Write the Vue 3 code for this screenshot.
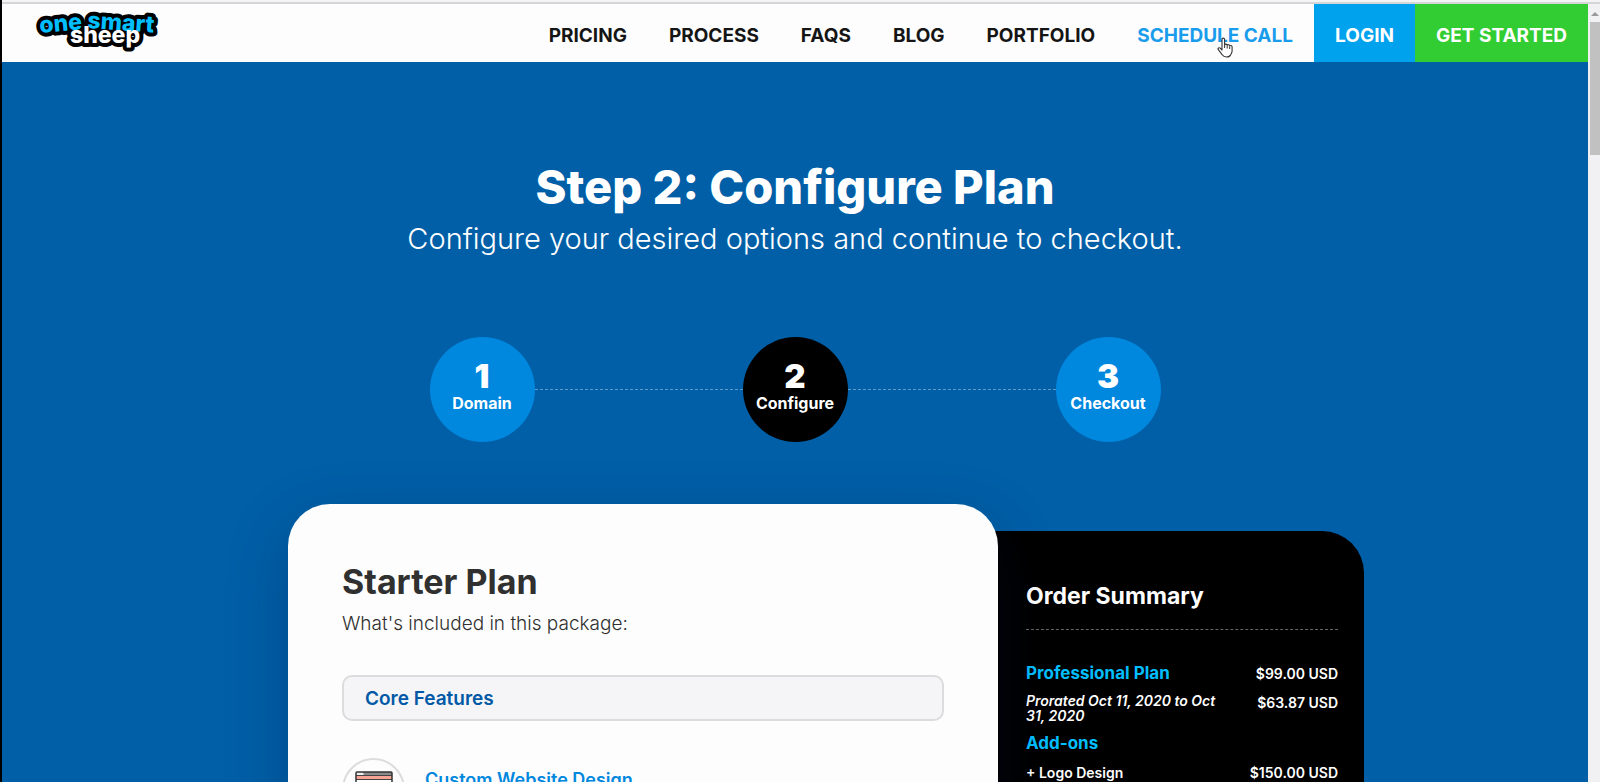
<script setup>
const links = ['Pricing', 'Process', 'FAQs', 'Blog', 'Portfolio']

const steps = [
  { number: 1, label: 'Domain', active: false },
  { number: 2, label: 'Configure', active: true },
  { number: 3, label: 'Checkout', active: false },
]
</script>

<template>
  <div class="window">
    <div class="chrome"></div>
    <div class="viewport">
      <div class="page">
        <header class="header">
          <a class="logo" href="#" aria-label="One Smart Sheep">
            <svg width="136" height="50" viewBox="-4 -4 136 50" aria-hidden="true">
              <use class="logo-outline" href="#logo-one" />
              <use class="logo-outline" href="#logo-smart" />
              <use class="logo-outline" href="#logo-sheep" />
              <g class="logo-text">
                <text id="logo-one" x="4" y="21" transform="rotate(-5 4 21)">one</text>
                <text id="logo-smart" x="51" y="16" transform="rotate(4 51 16)">smart</text>
              </g>
              <g class="logo-text white">
                <text id="logo-sheep" x="34" y="31">sheep</text>
              </g>
            </svg>
          </a>
          <nav class="nav">
            <a v-for="link in links" :key="link" href="#">{{ link }}</a>
            <a class="hovered" href="#">
              Schedule Call
              <svg class="pointer" width="17" height="21" viewBox="0 0 17 21" aria-hidden="true">
                <path
                  d="M5 12V2.5C5 .6 7.6.6 7.6 2.5V8c.3-1.3 2.5-1.2 2.6.3.4-1 2.4-.9 2.5.7.6-.9 2.4-.6 2.4 1v4c0 1.500-1 2.500-1.300 3.500C13 19.600 11 20 9.500 20c-2 0-3.300-.700-4.200-2.200L1.300 12.700c-.8-1.400.8-2.600 2-1.500L5 13z"
                  fill="#fff" stroke="#333" stroke-width="1.100" stroke-linejoin="round"
                />
                <path d="M7.600 8v3M10.200 8.500v3M12.700 9.500v2.500" stroke="#333" />
              </svg>
            </a>
            <a class="login" href="#">Login</a>
            <a class="start" href="#">Get Started</a>
          </nav>
        </header>

        <main class="main">
          <h1>Step 2: Configure Plan</h1>
          <p class="lead">Configure your desired options and continue to checkout.</p>

          <ol class="steps">
            <li v-for="step in steps" :key="step.number" class="step" :class="{ active: step.active }">
              <span class="circle">
                <b>{{ step.number }}</b>
                <span>{{ step.label }}</span>
              </span>
            </li>
          </ol>

          <div class="columns">
            <section class="plan">
              <h2>Starter Plan</h2>
              <p class="included">What's included in this package:</p>
              <h3 class="group">Core Features</h3>
              <div class="feature">
                <span class="feature-icon">
                  <svg width="38" height="38" viewBox="0 0 38 38" aria-hidden="true">
                    <rect x="1" y="1" width="36" height="36" fill="#fff" />
                    <rect x="1" y="1" width="36" height="4" fill="#8a8a8a" />
                    <path d="M1 1h7l1 4H1z" fill="#eee" />
                    <rect x="1" y="5" width="36" height="3" fill="#f7a494" />
                    <path d="M1 4.500h36M1 8.500h36" stroke="#444" />
                    <path d="M5 11.500h12M5 15.500h10" stroke="#777" />
                    <rect x="1" y="1" width="36" height="36" rx="1" fill="none" stroke="#333" stroke-width="1.500" />
                  </svg>
                </span>
                <h4>Custom Website Design</h4>
              </div>
            </section>

            <aside class="summary">
              <h2>Order Summary</h2>
              <table>
                <tbody>
                  <tr>
                    <th class="heading" scope="row">Professional Plan</th>
                    <td>$99.00 USD</td>
                  </tr>
                  <tr class="prorated">
                    <th scope="row">Prorated Oct 11, 2020 to Oct 31, 2020</th>
                    <td>$63.87 USD</td>
                  </tr>
                  <tr>
                    <th class="heading" scope="row" colspan="2">Add-ons</th>
                  </tr>
                  <tr>
                    <th scope="row">+ Logo Design</th>
                    <td>$150.00 USD</td>
                  </tr>
                </tbody>
              </table>
            </aside>
          </div>
        </main>
      </div>
      <div class="scrollbar" aria-hidden="true">
        <svg width="10" height="18" viewBox="0 0 10 18"><path d="M1 12l4-4 4 4z" fill="#999" /></svg>
        <div class="thumb"></div>
      </div>
    </div>
  </div>
</template>

<style>
body {
  margin: 0;
}
</style>

<style scoped>
.window {
  display: flex;
  flex-direction: column;
  height: 100vh;
  overflow: hidden;
  box-sizing: border-box;
  border-left: 2px solid #000;
  font-family: Inter, "Liberation Sans", sans-serif;
  color: #fff;
}

.chrome {
  flex: none;
  height: 2px;
  background: #f4f4f4;
  border-bottom: 2px solid #d3d5d8;
}

.viewport {
  display: flex;
  flex: 1;
  min-height: 0;
}

.page {
  flex: 1;
  min-width: 0;
  overflow: hidden;
  background: #005fa7;
}

.header {
  display: flex;
  justify-content: space-between;
  height: 58px;
  background: #fdfdfd;
}

.logo {
  margin: 4px 0 0 30px;
}

.logo svg {
  display: block;
  overflow: visible;
}

.logo-outline,
.logo-text {
  font-size: 23px;
  font-weight: 800;
}

.logo-outline {
  fill: #000;
  stroke: #000;
  stroke-width: 8px;
  stroke-linejoin: round;
}

.logo-text {
  fill: #00bfff;
}

.white {
  fill: #fff;
}

.nav {
  display: flex;
}

.nav a {
  position: relative;
  padding: 0 21px;
  font-size: 19px;
  font-weight: 700;
  line-height: 63px;
  height: 58px;
  color: #151515;
  text-decoration: none;
  text-transform: uppercase;
  white-space: nowrap;
}

.nav .hovered {
  color: #1a9cec;
}

.nav .login {
  background: #00a2ee;
  color: #fff;
}

.nav .start {
  background: #32cd32;
  color: #fff;
}

.pointer {
  position: absolute;
  top: 33px;
  left: 101px;
  fill: none;
}

.main {
  padding: 96px 24px 0;
}

h1,
h2,
h3,
h4,
p {
  margin: 0;
}

h1 {
  font-size: 47px;
  font-weight: 800;
  line-height: 58px;
  text-align: center;
}

.lead {
  margin-top: 2px;
  font-size: 29px;
  font-weight: 300;
  line-height: 42px;
  text-align: center;
}

.steps {
  display: flex;
  justify-content: center;
  margin: 77px 0 0;
  padding: 0;
  list-style: none;
}

.step {
  display: flex;
  align-items: center;
}

.step + .step::before {
  content: "";
  width: 208px;
  border-top: 1px dashed #5c9bcb;
}

.circle {
  display: flex;
  flex-direction: column;
  align-items: center;
  box-sizing: border-box;
  width: 105px;
  height: 105px;
  padding-top: 23px;
  border-radius: 50%;
  background: #0087de;
  font-size: 16px;
  font-weight: 700;
  line-height: 22px;
}

.circle b {
  font-size: 33px;
  font-weight: 900;
  line-height: 32px;
}

.active .circle {
  background: #000;
}

.columns {
  display: grid;
  grid-template-columns: 710fr 366fr;
  align-items: start;
  box-sizing: border-box;
  max-width: 1138px;
  margin: 62px auto 0;
  padding-left: 62px;
}

.plan {
  position: relative;
  z-index: 1;
  min-height: 400px;
  padding: 57px 54px 0;
  border-radius: 42px;
  background: #fdfdfd;
  box-shadow: 0 20px 60px rgba(0, 20, 60, 0.28);
  color: #303030;
}

.plan h2 {
  font-size: 34px;
  font-weight: 700;
  line-height: 42px;
}

.included {
  margin-top: 7px;
  font-size: 19px;
  font-weight: 300;
  line-height: 28px;
}

.group {
  margin-top: 37px;
  padding: 2px 21px 0;
  border: 2px solid #dcdcdc;
  border-radius: 10px;
  background: #f5f5f7;
  font-size: 19px;
  font-weight: 600;
  line-height: 40px;
  color: #0059a6;
}

.feature {
  display: flex;
  gap: 20px;
  margin-top: 37px;
}

.feature-icon {
  display: grid;
  place-items: center;
  box-sizing: border-box;
  width: 63px;
  height: 63px;
  border: 2px solid #dcdcdc;
  border-radius: 50%;
}

.feature h4 {
  padding-top: 8px;
  font-size: 18px;
  font-weight: 600;
  line-height: 28px;
  color: #0087de;
}

.summary {
  min-height: 400px;
  margin: 27px 0 0 -60px;
  padding: 50px 26px 0 88px;
  border-radius: 0 42px 0 0;
  background: #000;
}

.summary h2 {
  padding-bottom: 18px;
  border-bottom: 1px dashed #666;
  font-size: 23px;
  font-weight: 700;
  line-height: 30px;
}

table {
  width: 100%;
  margin-top: 29px;
  border-collapse: collapse;
  font-size: 14px;
  line-height: 29px;
}

th,
td {
  padding: 0;
  font-weight: 600;
  text-align: left;
  vertical-align: top;
}

td {
  text-align: right;
  white-space: nowrap;
}

.heading {
  font-size: 17px;
  font-weight: 700;
  color: #00bfff;
}

.prorated th {
  padding: 5px 24px 6px 0;
  font-style: italic;
  line-height: 15px;
}

.scrollbar {
  flex: none;
  width: 10px;
  padding-left: 2px;
  background: #f1f1f3;
}

.scrollbar svg {
  display: block;
}

.thumb {
  height: 133px;
  background: #c1c1c1;
}
</style>
